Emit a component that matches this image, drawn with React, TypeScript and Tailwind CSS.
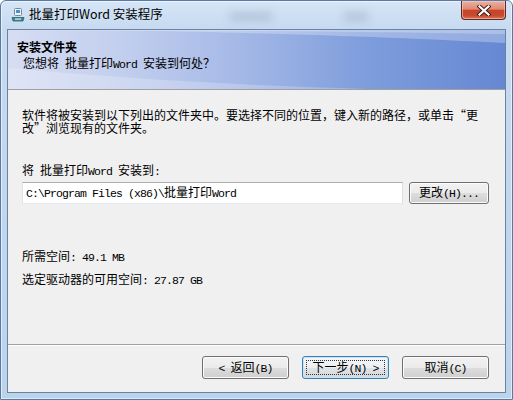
import type { ReactNode } from "react";

// latin runs in the old SimSun dialogs are half-width (6px at 12px)
const L = ({ children }: { children: ReactNode }) => (
  <span className="font-['Liberation_Mono',monospace] text-[11.5px] tracking-[-0.9px]">{children}</span>
);

const SetupIcon = () => (
  <svg width="14" height="14" viewBox="0 0 14 14" aria-hidden="true">
    <rect x="3.5" y="0.5" width="7" height="7" rx="1" fill="#eef3f8" stroke="#7a8898" />
    <rect x="5" y="2" width="4" height="3" fill="#3f95d6" />
    <path d="M1 9.5h12l-1 3.5H2z" fill="#3c8b98" stroke="#2b5f6a" strokeWidth="0.8" />
    <rect x="4" y="10.5" width="6" height="1.2" fill="#d8eef2" />
  </svg>
);

const CloseButton = () => (
  <div className="ml-auto flex h-[19px] w-[45px] items-center justify-center self-start rounded-b-[4px] border border-t-0 border-[#5b2a22] bg-[linear-gradient(180deg,#eab1a3_0%,#df8a74_45%,#c9432a_52%,#c64a2e_80%,#d9755a_100%)] shadow-[inset_0_0_0_1px_rgba(255,210,200,0.55)]">
    <svg width="14" height="11" viewBox="0 0 14 11" aria-hidden="true">
      <path d="M2.5 1.5l9 8M11.5 1.5l-9 8" stroke="#3a1a14" strokeWidth="4" strokeLinecap="square" />
      <path d="M2.5 1.5l9 8M11.5 1.5l-9 8" stroke="#ffffff" strokeWidth="2.2" strokeLinecap="square" />
    </svg>
  </div>
);

const TitleBar = () => (
  <div className="relative flex h-[28px] items-start">
    <div className="absolute left-[228px] top-[11px] h-[9px] w-[44px] rounded-full bg-[#8e9fb4] opacity-40 blur-[4px]" />
    <div className="absolute left-[342px] top-[11px] h-[9px] w-[26px] rounded-full bg-[#8e9fb4] opacity-40 blur-[4px]" />
    <div className="relative flex h-[27px] items-center pl-[10px]">
      <SetupIcon />
      <span className="ml-[4px] font-['Noto_Sans_CJK_SC',sans-serif] text-[12.5px] text-black">
        批量打印Word 安装程序
      </span>
    </div>
    <div className="relative mr-[6px] ml-auto flex">
      <CloseButton />
    </div>
  </div>
);

const Header = () => (
  <div className="relative h-[60px] overflow-hidden border-b border-[#a0a0a0] bg-[linear-gradient(90deg,#d6ddf3_0%,#c3cfee_22%,#a3b7e6_48%,#7e9ddc_72%,#6688d3_100%)]">
    <svg
      className="absolute inset-0 h-full w-full"
      viewBox="0 0 497 59"
      preserveAspectRatio="none"
      aria-hidden="true"
    >
      <path d="M0 0H497V13C400 8 300 4 150 1L0 0Z" fill="#ffffff" opacity="0.28" />
      <path d="M0 0H497V4C380 2 220 0 0 0Z" fill="#ffffff" opacity="0.25" />
      <path d="M0 38C110 48 240 56 360 59H0Z" fill="#ffffff" opacity="0.22" />
    </svg>
    <div className="relative flex flex-col pt-[11px] pl-[9px] text-[12px] leading-[12px] text-black">
      <p className="font-bold">安装文件夹</p>
      <p className="mt-[4px] ml-[6px]">
        您想将<L> </L>批量打印<L>Word </L>安装到何处？
      </p>
    </div>
  </div>
);

const Btn = ({ children, primary = false }: { children: ReactNode; primary?: boolean }) =>
  primary ? (
    <div className="relative flex h-[23px] w-[87px] items-center justify-center rounded-[3px] border border-[#3c7fb1] bg-[linear-gradient(180deg,#f4f6f8_0%,#eceff2_50%,#dfe3e7_52%,#d3d8dd_100%)] shadow-[inset_0_0_0_1px_#c6e4f7] text-[12px] leading-[12px]">
      <div className="absolute inset-[3px] border border-dotted border-[#333]" />
      <span className="relative whitespace-pre">{children}</span>
    </div>
  ) : (
    <div className="flex h-[23px] w-[87px] items-center justify-center rounded-[3px] border border-[#707070] bg-[linear-gradient(180deg,#f2f2f2_0%,#ebebeb_50%,#dddddd_52%,#cfcfcf_100%)] shadow-[inset_0_0_0_1px_#fbfbfb] text-[12px] leading-[12px]">
      <span className="whitespace-pre">{children}</span>
    </div>
  );

const App = () => {
  return (
    <div className="h-[400px] w-[513px] bg-white font-['Noto_Sans_CJK_SC',sans-serif] text-black">
      <div className="flex h-[400px] w-[513px] flex-col overflow-hidden rounded-t-[6px] border border-[#587aa4] bg-[linear-gradient(180deg,#d6e5f6_0%,#c6daf0_28px,#bcd3ec_100%)] shadow-[inset_0_0_0_1px_rgba(255,255,255,0.55)]">
        <TitleBar />

        <div className="mx-[6px] mb-[6px] flex flex-1 flex-col border border-[#6a83a3] bg-[#f0f0f0]">
          <Header />

          <div className="flex flex-1 flex-col pt-[18px] pr-[16px] pl-[14px] text-[12px] leading-[12px]">
            <p className="whitespace-nowrap leading-[13px]">
              软件将被安装到以下列出的文件夹中。要选择不同的位置，键入新的路径，或单击“更
              <br />
              改”浏览现有的文件夹。
            </p>

            <p className="mt-[30px]">
              将<L> </L>批量打印<L>Word </L>安装到<L>:</L>
            </p>

            <div className="mt-[4px] flex gap-[6px]">
              <div className="flex h-[22px] flex-1 items-center border border-[#abadb3] border-r-[#dbdfe6] border-b-[#e3e9ef] border-l-[#e2e3ea] bg-white pl-[3px]">
                <span className="whitespace-pre">
                  <L>C:\Program Files (x86)\</L>批量打印<L>Word</L>
                </span>
              </div>
              <div className="flex h-[22px] w-[80px] items-center justify-center rounded-[3px] border border-[#707070] bg-[linear-gradient(180deg,#f2f2f2_0%,#ebebeb_50%,#dddddd_52%,#cfcfcf_100%)] shadow-[inset_0_0_0_1px_#fbfbfb]">
                <span>
                  更改<L>(H)...</L>
                </span>
              </div>
            </div>

            <p className="mt-[46px]">
              所需空间<L>: 49.1 MB</L>
            </p>
            <p className="mt-[9px]">
              选定驱动器的可用空间<L>: 27.87 GB</L>
            </p>
          </div>

          <div className="border-t border-[#a0a0a0]">
            <div className="flex h-[47px] justify-end gap-[13px] border-t border-white pt-[10px] pr-[16px]">
              <Btn>
                <L>{"< "}</L>返回<L>(B)</L>
              </Btn>
              <Btn primary>
                下一步<L>{"(N) >"}</L>
              </Btn>
              <Btn>
                取消<L>(C)</L>
              </Btn>
            </div>
          </div>
        </div>
      </div>
    </div>
  );
};

export default App;
